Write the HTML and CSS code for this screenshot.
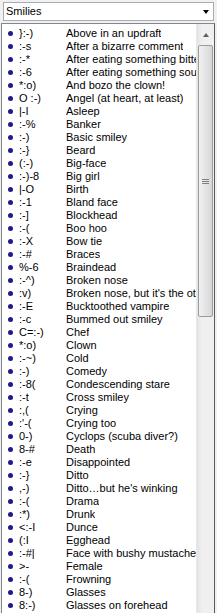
FILE: index.html
```html
<!DOCTYPE html>
<html>
<head>
<meta charset="utf-8">
<link rel="stylesheet" href="styles.css">
</head>
<body>
<div class="select"><span class="sel-text">Smilies</span><span class="sel-arrow"></span></div>
<div class="listbox">
  <ul class="items">
    <li><span class="dot"></span><span class="code">}:-)</span><span class="desc">Above in an updraft</span></li>
    <li><span class="dot"></span><span class="code">:-s</span><span class="desc">After a bizarre comment</span></li>
    <li><span class="dot"></span><span class="code">:-*</span><span class="desc">After eating something bitter</span></li>
    <li><span class="dot"></span><span class="code">:-6</span><span class="desc">After eating something sour</span></li>
    <li><span class="dot"></span><span class="code">*:o)</span><span class="desc">And bozo the clown!</span></li>
    <li><span class="dot"></span><span class="code">O :-)</span><span class="desc">Angel (at heart, at least)</span></li>
    <li><span class="dot"></span><span class="code">|-I</span><span class="desc">Asleep</span></li>
    <li><span class="dot"></span><span class="code">:-%</span><span class="desc">Banker</span></li>
    <li><span class="dot"></span><span class="code">:-)</span><span class="desc">Basic smiley</span></li>
    <li><span class="dot"></span><span class="code">:-}</span><span class="desc">Beard</span></li>
    <li><span class="dot"></span><span class="code">(:-)</span><span class="desc">Big-face</span></li>
    <li><span class="dot"></span><span class="code">:-)-8</span><span class="desc">Big girl</span></li>
    <li><span class="dot"></span><span class="code">|-O</span><span class="desc">Birth</span></li>
    <li><span class="dot"></span><span class="code">:-1</span><span class="desc">Bland face</span></li>
    <li><span class="dot"></span><span class="code">:-]</span><span class="desc">Blockhead</span></li>
    <li><span class="dot"></span><span class="code">:-(</span><span class="desc">Boo hoo</span></li>
    <li><span class="dot"></span><span class="code">:-X</span><span class="desc">Bow tie</span></li>
    <li><span class="dot"></span><span class="code">:-#</span><span class="desc">Braces</span></li>
    <li><span class="dot"></span><span class="code">%-6</span><span class="desc">Braindead</span></li>
    <li><span class="dot"></span><span class="code">:-^)</span><span class="desc">Broken nose</span></li>
    <li><span class="dot"></span><span class="code">:v)</span><span class="desc">Broken nose, but it's the other way</span></li>
    <li><span class="dot"></span><span class="code">:-E</span><span class="desc">Bucktoothed vampire</span></li>
    <li><span class="dot"></span><span class="code">:-c</span><span class="desc">Bummed out smiley</span></li>
    <li><span class="dot"></span><span class="code">C=:-)</span><span class="desc">Chef</span></li>
    <li><span class="dot"></span><span class="code">*:o)</span><span class="desc">Clown</span></li>
    <li><span class="dot"></span><span class="code">:-~)</span><span class="desc">Cold</span></li>
    <li><span class="dot"></span><span class="code">:-)</span><span class="desc">Comedy</span></li>
    <li><span class="dot"></span><span class="code">:-8(</span><span class="desc">Condescending stare</span></li>
    <li><span class="dot"></span><span class="code">:-t</span><span class="desc">Cross smiley</span></li>
    <li><span class="dot"></span><span class="code">:,(</span><span class="desc">Crying</span></li>
    <li><span class="dot"></span><span class="code">:'-(</span><span class="desc">Crying too</span></li>
    <li><span class="dot"></span><span class="code">0-)</span><span class="desc">Cyclops (scuba diver?)</span></li>
    <li><span class="dot"></span><span class="code">8-#</span><span class="desc">Death</span></li>
    <li><span class="dot"></span><span class="code">:-e</span><span class="desc">Disappointed</span></li>
    <li><span class="dot"></span><span class="code">:-}</span><span class="desc">Ditto</span></li>
    <li><span class="dot"></span><span class="code">,-)</span><span class="desc">Ditto…but he's winking</span></li>
    <li><span class="dot"></span><span class="code">:-(</span><span class="desc">Drama</span></li>
    <li><span class="dot"></span><span class="code">:*)</span><span class="desc">Drunk</span></li>
    <li><span class="dot"></span><span class="code">&lt;:-I</span><span class="desc">Dunce</span></li>
    <li><span class="dot"></span><span class="code">(:I</span><span class="desc">Egghead</span></li>
    <li><span class="dot"></span><span class="code">:-#|</span><span class="desc">Face with bushy mustache</span></li>
    <li><span class="dot"></span><span class="code">&gt;-</span><span class="desc">Female</span></li>
    <li><span class="dot"></span><span class="code">:-(</span><span class="desc">Frowning</span></li>
    <li><span class="dot"></span><span class="code">8-)</span><span class="desc">Glasses</span></li>
    <li><span class="dot"></span><span class="code">8:-)</span><span class="desc">Glasses on forehead</span></li>
  </ul>
  <div class="scrollbar">
    <div class="sb-up"><span class="up-arrow"></span></div>
    <div class="sb-thumb"><span class="grip"></span></div>
    <div class="sb-rest"></div>
  </div>
</div>
</body>
</html>
```
FILE: styles.css
```css
html, body {
  margin: 0;
  padding: 0;
  background: #f0f0f0;
  height: 613px;
  overflow: hidden;
  font-family: "Liberation Sans", Arial, sans-serif;
  font-size: 11px;
  color: #000;
}
.select {
  margin: 2px 3px 0 3px;
  height: 17px;
  border: 1px solid #a5acb5;
  background: #fff;
  display: flex;
  align-items: center;
  justify-content: space-between;
  padding: 0 4px 0 2px;
}
.sel-text {
  line-height: 17px;
}
.sel-arrow {
  width: 0;
  height: 0;
  border-left: 3.5px solid transparent;
  border-right: 3.5px solid transparent;
  border-top: 4px solid #000;
}
.listbox {
  margin: 2px 2px 0 1px;
  border: 1px solid #828790;
  border-right: 1px solid #5a5a5a;
  background: #fff;
  height: 600px;
  display: flex;
  overflow: hidden;
}
.items {
  list-style: none;
  margin: 0;
  padding: 3px 0 0 0;
  flex: 1;
  overflow: hidden;
}
.items li {
  display: flex;
  align-items: center;
  height: 13px;
  line-height: 13px;
  white-space: nowrap;
}
.dot {
  width: 5px;
  height: 5px;
  border-radius: 50%;
  background: #1c1c8c;
  margin: 0 6px 0 6px;
  flex: none;
}
.code {
  width: 47px;
  flex: none;
}
.desc {
  overflow: hidden;
}
.scrollbar {
  width: 17px;
  flex: none;
  display: flex;
  flex-direction: column;
  background: linear-gradient(to right, #e3e3e3, #f0f0f0 30%, #f0f0f0);
  border-left: 1px solid #e8e8e8;
}
.sb-up {
  height: 21px;
  display: flex;
  align-items: center;
  justify-content: center;
}
.up-arrow {
  width: 0;
  height: 0;
  border-left: 3.5px solid transparent;
  border-right: 3.5px solid transparent;
  border-bottom: 4px solid #606060;
}
.sb-thumb {
  height: 270px;
  margin: 0 1px;
  border: 1px solid #9c9c9c;
  border-radius: 2px;
  background: linear-gradient(to right, #f2f2f2, #e4e4e4 50%, #d6d6d6);
  display: flex;
  align-items: center;
  justify-content: center;
}
.grip {
  width: 7px;
  height: 5px;
  background: repeating-linear-gradient(to bottom, #808080 0, #808080 1px, transparent 1px, transparent 2px);
}
.sb-rest {
  flex: 1;
}
```
